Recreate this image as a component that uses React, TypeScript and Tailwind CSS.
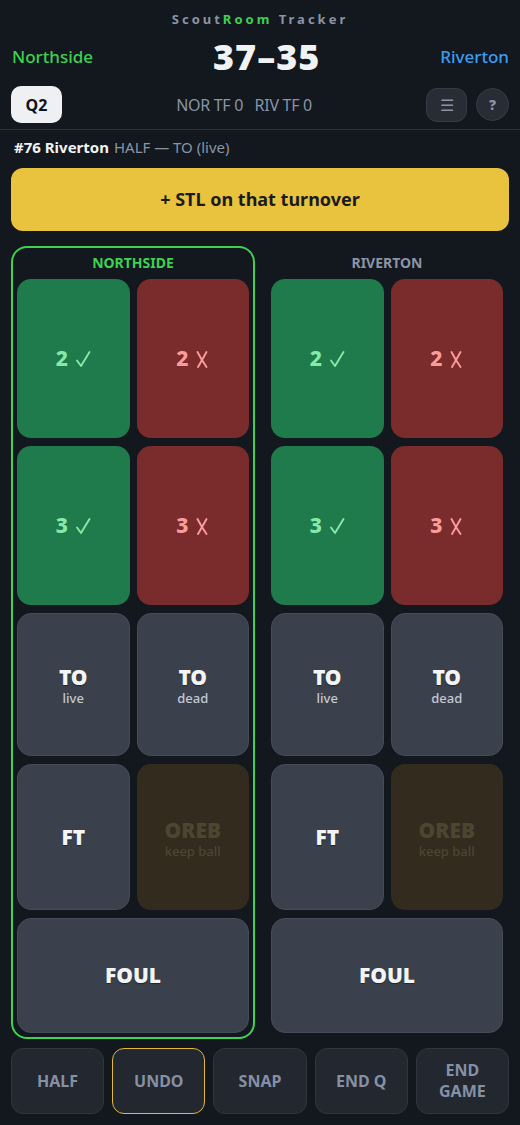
import React from "react";

type Team = { name: string; active: boolean };

const teams: Team[] = [
  { name: "NORTHSIDE", active: true },
  { name: "RIVERTON", active: false },
];

const shadow = "[text-shadow:0_1px_1px_rgba(0,0,0,0.45)]";

const Check = () => (
  <svg width="16" height="20" viewBox="0 0 16 20" fill="none" stroke="currentColor" strokeWidth="1.9" strokeLinecap="round" strokeLinejoin="round">
    <path d="M2 11.5 L6 17 L14.5 3" />
  </svg>
);

const Cross = () => (
  <svg width="14" height="20" viewBox="0 0 14 20" fill="none" stroke="currentColor" strokeWidth="1.9" strokeLinecap="round">
    <path d="M2.5 3 C5 8 8 13 11.5 18" />
    <path d="M11.5 3 C9 7.5 6 13 3 18" />
  </svg>
);

const ShotButton: React.FC<{ pts: number; made: boolean }> = ({ pts, made }) => (
  <button
    className={`h-[159px] rounded-[14px] flex items-center justify-center gap-[7px] ${
      made ? "bg-[#1f7a4c] text-[#86e9a8]" : "bg-[#7a2c2c] text-[#fb9c9c]"
    }`}
  >
    <span className="text-[21px] font-extrabold">{pts}</span>
    {made ? <Check /> : <Cross />}
  </button>
);

const TeamPanel: React.FC<{ team: Team }> = ({ team }) => (
  <div
    className={`rounded-[16px] border-2 px-[4px] pb-[4px] ${
      team.active ? "border-[#3dd24f]" : "border-transparent"
    }`}
  >
    <div
      className={`h-[28px] mb-[3px] flex items-center justify-center text-[14px] font-bold ${
        team.active ? "text-[#3dd24f]" : "text-[#8a94a6]"
      }`}
    >
      {team.name}
    </div>
    <div className="grid grid-cols-2 gap-x-[7px] gap-y-[8px]">
      <ShotButton pts={2} made />
      <ShotButton pts={2} made={false} />
      <ShotButton pts={3} made />
      <ShotButton pts={3} made={false} />
      <button className="h-[143px] pt-[4px] rounded-[14px] border border-[#454c59] bg-[#3a414d] flex flex-col items-center justify-center">
        <span className={`text-[21px] leading-[20px] font-black text-[#f3f4f6] ${shadow}`}>TO</span>
        <span className="mt-[3px] text-[13px] leading-[16px] font-medium text-[#c3c8d1]">live</span>
      </button>
      <button className="h-[143px] pt-[4px] rounded-[14px] border border-[#454c59] bg-[#3a414d] flex flex-col items-center justify-center">
        <span className={`text-[21px] leading-[20px] font-black text-[#f3f4f6] ${shadow}`}>TO</span>
        <span className="mt-[3px] text-[13px] leading-[16px] font-medium text-[#c3c8d1]">dead</span>
      </button>
      <button className="h-[146px] pt-[2px] rounded-[14px] border border-[#454c59] bg-[#3a414d] flex items-center justify-center">
        <span className={`text-[21px] font-black text-[#f3f4f6] ${shadow}`}>FT</span>
      </button>
      <button className="h-[146px] pt-[4px] rounded-[14px] bg-[#322b1e] flex flex-col items-center justify-center">
        <span className="text-[21px] leading-[20px] font-black text-[#4c4532]">OREB</span>
        <span className="mt-[3px] text-[13px] leading-[16px] font-medium text-[#4c4532]">keep ball</span>
      </button>
      <button className="col-span-2 h-[115px] rounded-[14px] border border-[#454c59] bg-[#3a414d] flex items-center justify-center">
        <span className={`text-[21px] font-black text-[#f3f4f6] ${shadow}`}>FOUL</span>
      </button>
    </div>
  </div>
);

export default function App() {
  return (
    <div className="w-[520px] h-[1125px] bg-[#13171e] font-['Noto_Sans',sans-serif] overflow-hidden">
      {/* scoreboard */}
      <header className="px-[11px] pt-[12px] pb-[6px] border-b border-[#2b3039]">
        <div className="h-[16px] flex items-center justify-center text-[13px] font-bold tracking-[3px] text-[#8a94a6]">
          Scout<span className="text-[#3dd24f]">Room</span>&nbsp;Tracker
        </div>
        <div className="mt-[7px] h-[44px] flex items-center justify-between">
          <span className="pl-[1px] text-[17px] font-medium text-[#3dd24f]">Northside</span>
          <span className="text-[36px] font-black tracking-[1px] text-[#f1f2f4]">37–35</span>
          <span className="text-[17px] font-medium text-[#3b9cf0]">Riverton</span>
        </div>
        <div className="mt-[7px] h-[37px] flex items-center justify-between">
          <button className="w-[51px] h-[37px] rounded-[10px] bg-[#eef0f3] text-[16px] font-bold text-[#111318]">
            Q2
          </button>
          <span className="text-[16px] text-[#8a94a6] tracking-[-0.3px]">
            NOR TF 0&nbsp;&nbsp;&nbsp;RIV TF 0
          </span>
          <div className="flex items-center gap-[9px]">
            <button className="w-[41px] h-[34px] rounded-[11px] border border-[#363c47] bg-[#272c35] text-[16px] text-[#8a94a6] flex items-center justify-center">
              ☰
            </button>
            <button className="w-[33px] h-[33px] rounded-full border border-[#363c47] bg-[#272c35] text-[14px] font-black text-[#8a94a6] flex items-center justify-center">
              ?
            </button>
          </div>
        </div>
      </header>

      {/* last event */}
      <div className="px-[14px] mt-[7px] h-[20px] flex items-center text-[15px]">
        <span className="font-bold text-[#f1f2f4]">#76 Riverton</span>
        <span className="ml-[5px] text-[#8a94a6]">HALF — TO (live)</span>
      </div>

      <div className="px-[11px] mt-[11px]">
        <button className="w-full h-[63px] rounded-[12px] bg-[#e9c23e] text-[18px] font-bold text-[#1a1b1e]">
          + STL on that turnover
        </button>
      </div>

      {/* team boards */}
      <div className="mt-[15px] px-[11px] grid grid-cols-2 gap-[10px]">
        {teams.map((t) => (
          <TeamPanel key={t.name} team={t} />
        ))}
      </div>

      {/* footer actions */}
      <div className="mt-[9px] px-[11px] grid grid-cols-5 gap-[8px]">
        {["HALF", "UNDO", "SNAP", "END Q", "END GAME"].map((label) => (
          <button
            key={label}
            className={`h-[66px] rounded-[12px] border bg-[#222730] px-[12px] text-[16px] leading-[21px] font-bold text-[#8590a2] ${
              label === "UNDO" ? "border-[#e3b832]" : "border-[#2f353f]"
            }`}
          >
            {label}
          </button>
        ))}
      </div>
    </div>
  );
}
